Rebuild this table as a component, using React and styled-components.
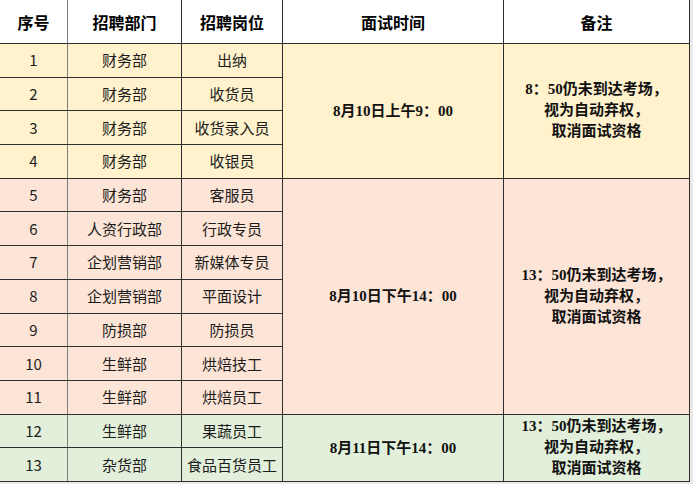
import React from 'react'
import styled, { createGlobalStyle } from 'styled-components'

const GlobalStyle = createGlobalStyle`
  html, body {
    margin: 0;
    padding: 0;
    background: #e9e9e9;
  }
`

const palette = {
  yellow: '#fff2cc',
  peach: '#fce4d6',
  green: '#e2efda',
}

const sans = `"Noto Sans CJK SC", "Liberation Sans", sans-serif`
const serif = `"Liberation Serif", "Noto Sans CJK SC", serif`

const Sheet = styled.div`
  display: grid;
  grid-template-columns: 67px 113px 100px 220px 185px;
  grid-template-rows: 43px repeat(13, 1fr);
  gap: 1px;
  width: 689px;
  height: 481px;
  padding: 0 1px 1px 0;
  background: #2e2e2e;
`

const Cell = styled.div`
  display: flex;
  align-items: center;
  justify-content: center;
  text-align: center;
  background: ${({ $tone }) => palette[$tone] || '#fff'};
  color: #1c1c1c;
  font-family: ${sans};
  font-size: 15px;
  line-height: 20px;
  grid-row: ${({ $span }) => ($span ? `span ${$span}` : 'auto')};
  box-shadow: ${({ $soft }) => ($soft ? '1px 0 0 #7d7d7d' : 'none')};
`

const HeadCell = styled(Cell)`
  font-size: 16px;
  font-weight: 700;
  color: #000;
`

const TimeCell = styled(Cell)`
  font-family: ${serif};
  font-weight: 700;
  font-size: 15px;
  color: #111;
`

const NoteCell = styled(TimeCell)`
  line-height: 21px;
`

const groups = [
  {
    tone: 'yellow',
    time: '8月10日上午9：00',
    note: ['8：50仍未到达考场，', '视为自动弃权，', '取消面试资格'],
    rows: [
      ['1', '财务部', '出纳'],
      ['2', '财务部', '收货员'],
      ['3', '财务部', '收货录入员'],
      ['4', '财务部', '收银员'],
    ],
  },
  {
    tone: 'peach',
    time: '8月10日下午14：00',
    note: ['13：50仍未到达考场，', '视为自动弃权，', '取消面试资格'],
    rows: [
      ['5', '财务部', '客服员'],
      ['6', '人资行政部', '行政专员'],
      ['7', '企划营销部', '新媒体专员'],
      ['8', '企划营销部', '平面设计'],
      ['9', '防损部', '防损员'],
      ['10', '生鲜部', '烘焙技工'],
      ['11', '生鲜部', '烘焙员工'],
    ],
  },
  {
    tone: 'green',
    time: '8月11日下午14：00',
    note: ['13：50仍未到达考场，', '视为自动弃权，', '取消面试资格'],
    rows: [
      ['12', '生鲜部', '果蔬员工'],
      ['13', '杂货部', '食品百货员工'],
    ],
  },
]

const headers = ['序号', '招聘部门', '招聘岗位', '面试时间', '备注']

export default function App() {
  return (
    <>
      <GlobalStyle />
      <Sheet>
        {headers.map((h, i) => (
          <HeadCell key={h} $soft={i === 0}>
            {h}
          </HeadCell>
        ))}
        {groups.map((g) =>
          g.rows.map(([no, dept, post], i) => (
            <React.Fragment key={no}>
              <Cell $tone={g.tone} $soft>
                {no}
              </Cell>
              <Cell $tone={g.tone}>{dept}</Cell>
              <Cell $tone={g.tone}>{post}</Cell>
              {i === 0 && (
                <>
                  <TimeCell $tone={g.tone} $span={g.rows.length}>
                    {g.time}
                  </TimeCell>
                  <NoteCell $tone={g.tone} $span={g.rows.length}>
                    <div>
                      {g.note.map((line) => (
                        <div key={line}>{line}</div>
                      ))}
                    </div>
                  </NoteCell>
                </>
              )}
            </React.Fragment>
          ))
        )}
      </Sheet>
    </>
  )
}
